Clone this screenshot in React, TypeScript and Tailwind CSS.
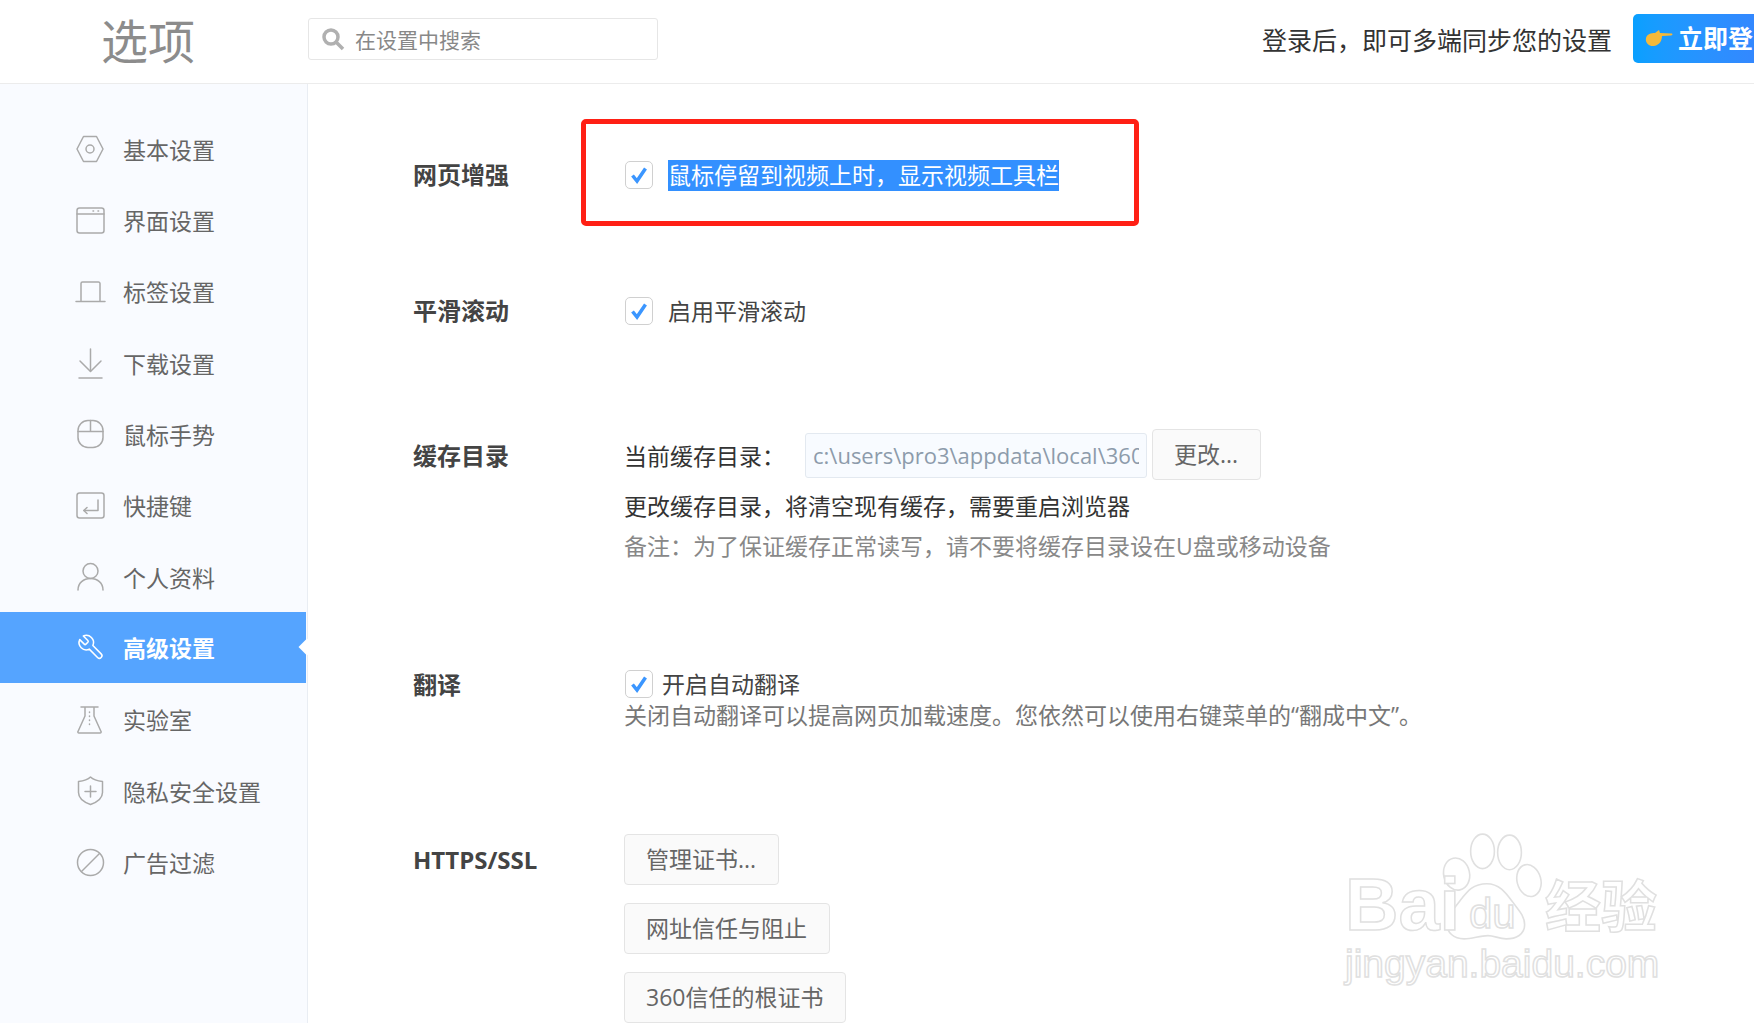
import React from "react";

const stroke = { fill: "none", stroke: "currentColor", strokeWidth: 1.5, strokeLinecap: "round", strokeLinejoin: "round" } as const;

const icons: Record<string, React.ReactNode> = {
  hex: (<><path d="M8.5 2.5h13L28 15l-6.5 12.5h-13L2 15z" /><circle cx="15" cy="15" r="4" /></>),
  win: (<><rect x="2" y="3" width="27" height="25" rx="2.5" /><path d="M2 9h27" /><path d="M18 6h.6M23 6h.6" /></>),
  tab: (<><path d="M6 25V7.5A1.5 1.5 0 0 1 7.500 6h16A1.500 1.500 0 0 1 25 7.500V25" /><path d="M1 25.500h29" /></>),
  down: (<><path d="M15.500 1v22" /><path d="M5 13l10.500 10.500L26 13" /><path d="M4 30h23" /></>),
  mouse: (<><rect x="3" y="1.500" width="25" height="27" rx="10" /><path d="M3 12.500h25M15.500 1.500v11" /></>),
  key: (<><rect x="2" y="3" width="27" height="25" rx="2.500" /><path d="M23 10v10.500H9" /><path d="M12 17.500l-3.200 3 3.200 3" /></>),
  user: (<><circle cx="15.500" cy="10" r="7.500" /><path d="M3 29c0-7 5.500-11.500 12.500-11.500S28 22 28 29" /></>),
  wrench: (
    <g transform="translate(30.500 1) scale(-1.200 1.200)" strokeWidth="1.300">
      <path d="M14.700 6.300a1 1 0 0 0 0 1.400l1.600 1.600a1 1 0 0 0 1.400 0l3.770-3.770a6 6 0 0 1-7.940 7.940l-6.910 6.910a2.120 2.120 0 0 1-3-3l6.910-6.910a6 6 0 0 1 7.940-7.940l-3.760 3.760z" />
    </g>
  ),
  flask: (<><path d="M6 3h17M10 3v9L3 27.500a1 1 0 0 0 1 1.500h21a1 1 0 0 0 1-1.500L19 12V3" /><path d="M14.500 8v.6M14.500 12v.6M14.500 16v.6M14.500 20v.6" /></>),
  shield: (<><path d="M15.500 2c3 3 7 4 12 4.500v11c0 5.500-5 9.500-12 12-7-2.500-12-6.500-12-12v-11c5-.5 9-1.500 12-4.500z" /><path d="M15.500 11v11M10 16.500h11" /></>),
  ban: (<><circle cx="15.500" cy="15.500" r="13" /><path d="M6.500 24.500l18-18" /></>),
};

const menu = [
  ["hex", "基本设置"],
  ["win", "界面设置"],
  ["tab", "标签设置"],
  ["down", "下载设置"],
  ["mouse", "鼠标手势"],
  ["key", "快捷键"],
  ["user", "个人资料"],
  ["wrench", "高级设置"],
  ["flask", "实验室"],
  ["shield", "隐私安全设置"],
  ["ban", "广告过滤"],
];

function Check() {
  return (
    <span className="ml-[1px] flex h-[28px] w-[28px] shrink-0 items-center justify-center rounded-[5px] border border-[#d0d0d0] bg-white">
      <svg width="18" height="18" viewBox="0 0 18 18">
        <path d="M2.500 9.500l4.500 5.500L15.500 2.500" fill="none" stroke="#3b96ff" strokeWidth="3.500" />
      </svg>
    </span>
  );
}

function Label({ children }: { children: React.ReactNode }) {
  return <div className="w-[211px] shrink-0 text-[24px] font-bold leading-[34px] text-[#444]">{children}</div>;
}

function Btn({ children }: { children: React.ReactNode }) {
  return (
    <button className="flex h-[51px] items-center rounded-[4px] border border-[#e4e4e4] bg-[#fafafa] pl-[21px] pr-[22px] text-[23px] text-[#666]">
      {children}
    </button>
  );
}

const outline = "text-white [-webkit-text-stroke:1.5px_#e0e0e0] [font-family:'Liberation_Sans','Noto_Sans_CJK_SC',sans-serif]";

export default function App() {
  return (
    <div className="relative h-[1023px] w-full overflow-hidden bg-white [font-family:'Open_Sans','Noto_Sans_CJK_SC',sans-serif]">
      <header className="flex h-[84px] items-center border-b border-[#ececec] pb-[6px]">
        <div className="w-[308px] pl-[101px] pt-[6px] text-[47px] leading-none text-[#8c8c8c]">选项</div>
        <div className="flex h-[42px] w-[350px] items-center rounded-[3px] border border-[#e6e6e6] pl-[12px]">
          <svg width="24" height="24" viewBox="0 0 24 24" className="text-[#b0b0b0]">
            <circle cx="10" cy="10" r="7" fill="none" stroke="currentColor" strokeWidth="3.500" />
            <path d="M15 15l7 7" stroke="currentColor" strokeWidth="3.500" />
          </svg>
          <span className="ml-[10px] pt-[4px] text-[21px] text-[#888]">在设置中搜索</span>
        </div>
        <div className="ml-auto flex items-center">
          <span className="mt-[4px] whitespace-nowrap text-[25px] text-[#333]">登录后，即可多端同步您的设置</span>
          <button className="ml-[21px] flex h-[49px] w-[121px] items-center overflow-hidden rounded-l-[5px] bg-gradient-to-r from-[#08a0ff] to-[#3388ff] pl-[12px] text-white">
            <svg width="28" height="20" viewBox="0 0 28 20" className="shrink-0">
              <path d="M1 9c1-4 5-5 9-5l4-3 1 3 12 .5c1 1 0 2-1 2l-9 .5c0 4-2 9-8 10-5 .5-9-3-8-8z" fill="#f5b93a" />
            </svg>
            <span className="ml-[5px] whitespace-nowrap text-[25px] font-bold">立即登录</span>
          </button>
        </div>
      </header>

      <div className="flex h-[939px]">
        <aside className="w-[308px] shrink-0 border-r border-[#e9edf3] bg-[#f9fbff] pt-[29px]">
          {menu.map(([icon, text]) => {
            const active = text === "高级设置";
            return (
              <div
                key={text}
                className={
                  active
                    ? "relative mr-[1px] flex h-[71.3px] items-center bg-[#55a4ff] pl-[75px] pt-[2px] text-white"
                    : "flex h-[71.3px] items-center pl-[75px] pt-[3px] text-[#aaa]"
                }
              >
                <svg width="31" height="31" viewBox="0 0 31 31" className="-mt-[2px] shrink-0" {...stroke}>
                  {icons[icon]}
                </svg>
                <span className={active ? "ml-[17px] text-[23px] font-bold text-white" : "ml-[17px] text-[23px] text-[#666]"}>
                  {text}
                </span>
                {active && <span className="absolute right-[-7px] top-[29px] h-[12px] w-[12px] rotate-45 bg-white" />}
              </div>
            );
          })}
        </aside>

        <main className="flex-1 pl-[105px] pt-[74px] text-[23px] text-[#444]">
          <div className="flex items-center">
            <Label>网页增强</Label>
            <Check />
            <span className="ml-[15px] bg-[#3390ff] leading-[31px] text-white">鼠标停留到视频上时，显示视频工具栏</span>
          </div>

          <div className="mt-[102px] flex items-center">
            <Label>平滑滚动</Label>
            <Check />
            <span className="ml-[15px] leading-[34px]">启用平滑滚动</span>
          </div>

          <div className="mt-[101px] flex">
            <div className="pt-[10px]"><Label>缓存目录</Label></div>
            <div>
              <div className="flex items-center">
                <span className="w-[181px] pt-[3px] text-[#333]">当前缓存目录：</span>
                <input
                  readOnly
                  value="c:\users\pro3\appdata\local\360chrome\chrome\user data"
                  className="mt-[1px] h-[45px] w-[342px] rounded-[3px] border border-[#e3e9f0] bg-[#f8fbff] px-[7px] text-[22px] text-[#8d9bab]"
                />
                <span className="ml-[5px]"><Btn>更改...</Btn></span>
              </div>
              <div className="mt-[9px] leading-[34px] text-[#333]">更改缓存目录，将清空现有缓存，需要重启浏览器</div>
              <div className="mt-[6px] leading-[34px] text-[#888]">备注：为了保证缓存正常读写，请不要将缓存目录设在U盘或移动设备</div>
            </div>
          </div>

          <div className="mt-[106px] flex">
            <div className="-mt-[1px]"><Label>翻译</Label></div>
            <div>
              <div className="flex items-center">
                <Check />
                <span className="ml-[9px] leading-[30px]">开启自动翻译</span>
              </div>
              <div className="leading-[32px] text-[#777]">关闭自动翻译可以提高网页加载速度。您依然可以使用右键菜单的“翻成中文”。</div>
            </div>
          </div>

          <div className="mt-[103px] flex">
            <div className="pt-[9px]"><Label>HTTPS/SSL</Label></div>
            <div className="flex flex-col items-start gap-[18px]">
              <Btn>管理证书...</Btn>
              <Btn>网址信任与阻止</Btn>
              <Btn>360信任的根证书</Btn>
            </div>
          </div>
        </main>
      </div>

      {/* annotation drawn over the page */}
      <div className="absolute left-[581px] top-[119px] h-[107px] w-[558px] rounded-[5px] border-[5px] border-[#ff2015]" />

      {/* watermark over the page */}
      <div className="pointer-events-none absolute left-[1345px] top-[833px] h-[160px] w-[320px]">
        <svg width="108" height="108" viewBox="0 0 100 100" className="absolute left-[90px] top-[0px]" fill="white" stroke="#e0e0e0" strokeWidth="1.500">
          <ellipse cx="20" cy="38" rx="12" ry="15" transform="rotate(-12 20 38)" />
          <ellipse cx="44" cy="17" rx="11" ry="16" />
          <ellipse cx="69" cy="18" rx="11" ry="16" />
          <ellipse cx="87" cy="44" rx="11" ry="15" transform="rotate(-15 87 44)" />
          <path d="M48 47c12 0 18 9 24 17 6 8 11 13 11 21 0 9-8 13-17 13-7 0-11-3-17-3-8 0-14 3-22 3-10 0-16-6-16-14 0-8 6-13 12-21 7-9 12-16 25-16z" />
        </svg>
        <span className={`absolute left-[0px] top-[36px] text-[74px] font-bold leading-[72px] ${outline}`}>Bai</span>
        <span className={`absolute left-[124px] top-[60px] text-[42px] leading-[42px] ${outline}`}>du</span>
        <span className={`absolute left-[200px] top-[45px] text-[56px] font-bold leading-[60px] ${outline}`}>经验</span>
        <span className={`absolute left-[0px] top-[109px] whitespace-nowrap text-[39px] leading-[44px] ${outline}`}>jingyan.baidu.com</span>
      </div>
    </div>
  );
}
